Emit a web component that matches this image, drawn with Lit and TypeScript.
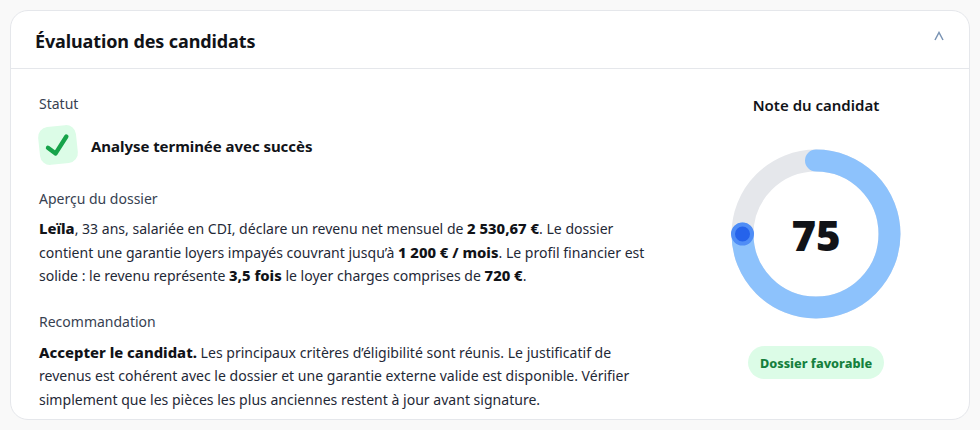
import { LitElement, html, css } from "lit";
import { customElement } from "lit/decorators.js";

@customElement("app-root")
export class AppRoot extends LitElement {
  static styles = css`
    :host {
      display: block;
      box-sizing: border-box;
      width: 980px;
      height: 430px;
      padding: 10px 10px 10px 10px;
      background: #f9f9f9;
      font-family: "Noto Sans", sans-serif;
      color: #111318;
      overflow: hidden;
    }
    .card {
      box-sizing: border-box;
      height: 410px;
      background: #fff;
      border: 1px solid #e5e7eb;
      border-radius: 18px;
      overflow: hidden;
    }
    .head {
      box-sizing: border-box;
      height: 58px;
      display: flex;
      align-items: center;
      justify-content: space-between;
      padding: 2px 25px 0 24px;
      border-bottom: 1px solid #e5e7eb;
    }
    .head h2 {
      margin: 0;
      font-size: 18px;
      font-weight: 700;
      letter-spacing: -0.12px;
    }
    .chev {
      color: #7a94b4;
      margin-top: -10px;
      display: flex;
    }
    .body {
      display: grid;
      grid-template-columns: 612px 1fr;
      padding: 24px 28px 0;
    }
    .label {
      font-size: 14px;
      line-height: 21px;
      color: #374151;
    }
    .status {
      display: flex;
      align-items: center;
      gap: 14px;
      margin: 12px 0 24px;
    }
    .tick {
      width: 38px;
      height: 38px;
      border-radius: 10px;
      background: #dcfce7;
      transform: rotate(-6deg);
      display: flex;
      align-items: center;
      justify-content: center;
      flex: none;
    }
    .status strong {
      font-size: 15px;
      font-weight: 700;
      letter-spacing: -0.05px;
      position: relative;
      top: 1px;
    }
    p {
      margin: 8px 0 0;
      font-size: 14.05px;
      line-height: 23.5px;
      color: #1f2937;
    }
    p b {
      font-size: 14.8px;
      font-weight: 800;
      color: #111318;
    }
    .sec {
      margin-top: 23px;
    }
    .sec + p {
      margin-top: 9px;
    }
    .right {
      display: flex;
      flex-direction: column;
      align-items: center;
      padding-left: 40px;
    }
    .note {
      font-size: 15px;
      font-weight: 600;
      line-height: 21px;
      margin-top: 2px;
    }
    .ring {
      position: relative;
      width: 172px;
      height: 172px;
      margin-top: 32px;
    }
    .ring svg {
      display: block;
    }
    .val {
      position: absolute;
      inset: 0;
      display: flex;
      align-items: center;
      justify-content: center;
      font-size: 42px;
      font-weight: 900;
      color: #111318;
    }
    .pill {
      margin-top: 26px;
      height: 33px;
      padding: 0 12px;
      border-radius: 17px;
      background: #dcfce7;
      color: #15803d;
      font-size: 12.7px;
      font-weight: 800;
      display: flex;
      align-items: center;
    }
  `;

  render() {
    const r = 73.5;
    const c = 2 * Math.PI * r;
    return html`
      <div class="card">
        <div class="head">
          <h2>Évaluation des candidats</h2>
          <span class="chev">
            <svg width="10" height="10" viewBox="0 0 10 10" fill="none" stroke="currentColor" stroke-width="1.5"><path d="M1 9 L5 1.5 L9 9"/></svg>
          </span>
        </div>
        <div class="body">
          <div>
            <div class="label">Statut</div>
            <div class="status">
              <span class="tick">
                <svg width="26" height="26" viewBox="0 0 24 24" fill="none" stroke="#16a34a" stroke-width="4" stroke-linecap="round" stroke-linejoin="round"><path d="M2.5 13.5 L9 19.5 L20.5 5"/></svg>
              </span>
              <strong>Analyse terminée avec succès</strong>
            </div>
            <div class="label">Aperçu du dossier</div>
            <p><b>Leïla</b>, 33 ans, salariée en CDI, déclare un revenu net mensuel de <b>2 530,67 €</b>. Le dossier contient une garantie loyers impayés couvrant jusqu’à <b>1 200 € / mois</b>. Le profil financier est solide : le revenu représente <b>3,5 fois</b> le loyer charges comprises de <b>720 €</b>.</p>
            <div class="label sec">Recommandation</div>
            <p><b>Accepter le candidat.</b> Les principaux critères d’éligibilité sont réunis. Le justificatif de revenus est cohérent avec le dossier et une garantie externe valide est disponible. Vérifier simplement que les pièces les plus anciennes restent à jour avant signature.</p>
          </div>
          <div class="right">
            <div class="note">Note du candidat</div>
            <div class="ring">
              <svg width="172" height="172" viewBox="0 0 172 172" fill="none">
                <circle cx="86" cy="86" r="${r}" stroke="#e5e7eb" stroke-width="22"/>
                <circle cx="86" cy="86" r="${r}" stroke="#8dc2fc" stroke-width="22" stroke-linecap="round"
                  stroke-dasharray="${c * 0.75} ${c}" transform="rotate(-90 86 86)"/>
                <circle cx="12.5" cy="86" r="9.5" fill="#2563eb" stroke="#4f8df6" stroke-width="4"/>
              </svg>
              <div class="val">75</div>
            </div>
            <div class="pill">Dossier favorable</div>
          </div>
        </div>
      </div>
    `;
  }
}
